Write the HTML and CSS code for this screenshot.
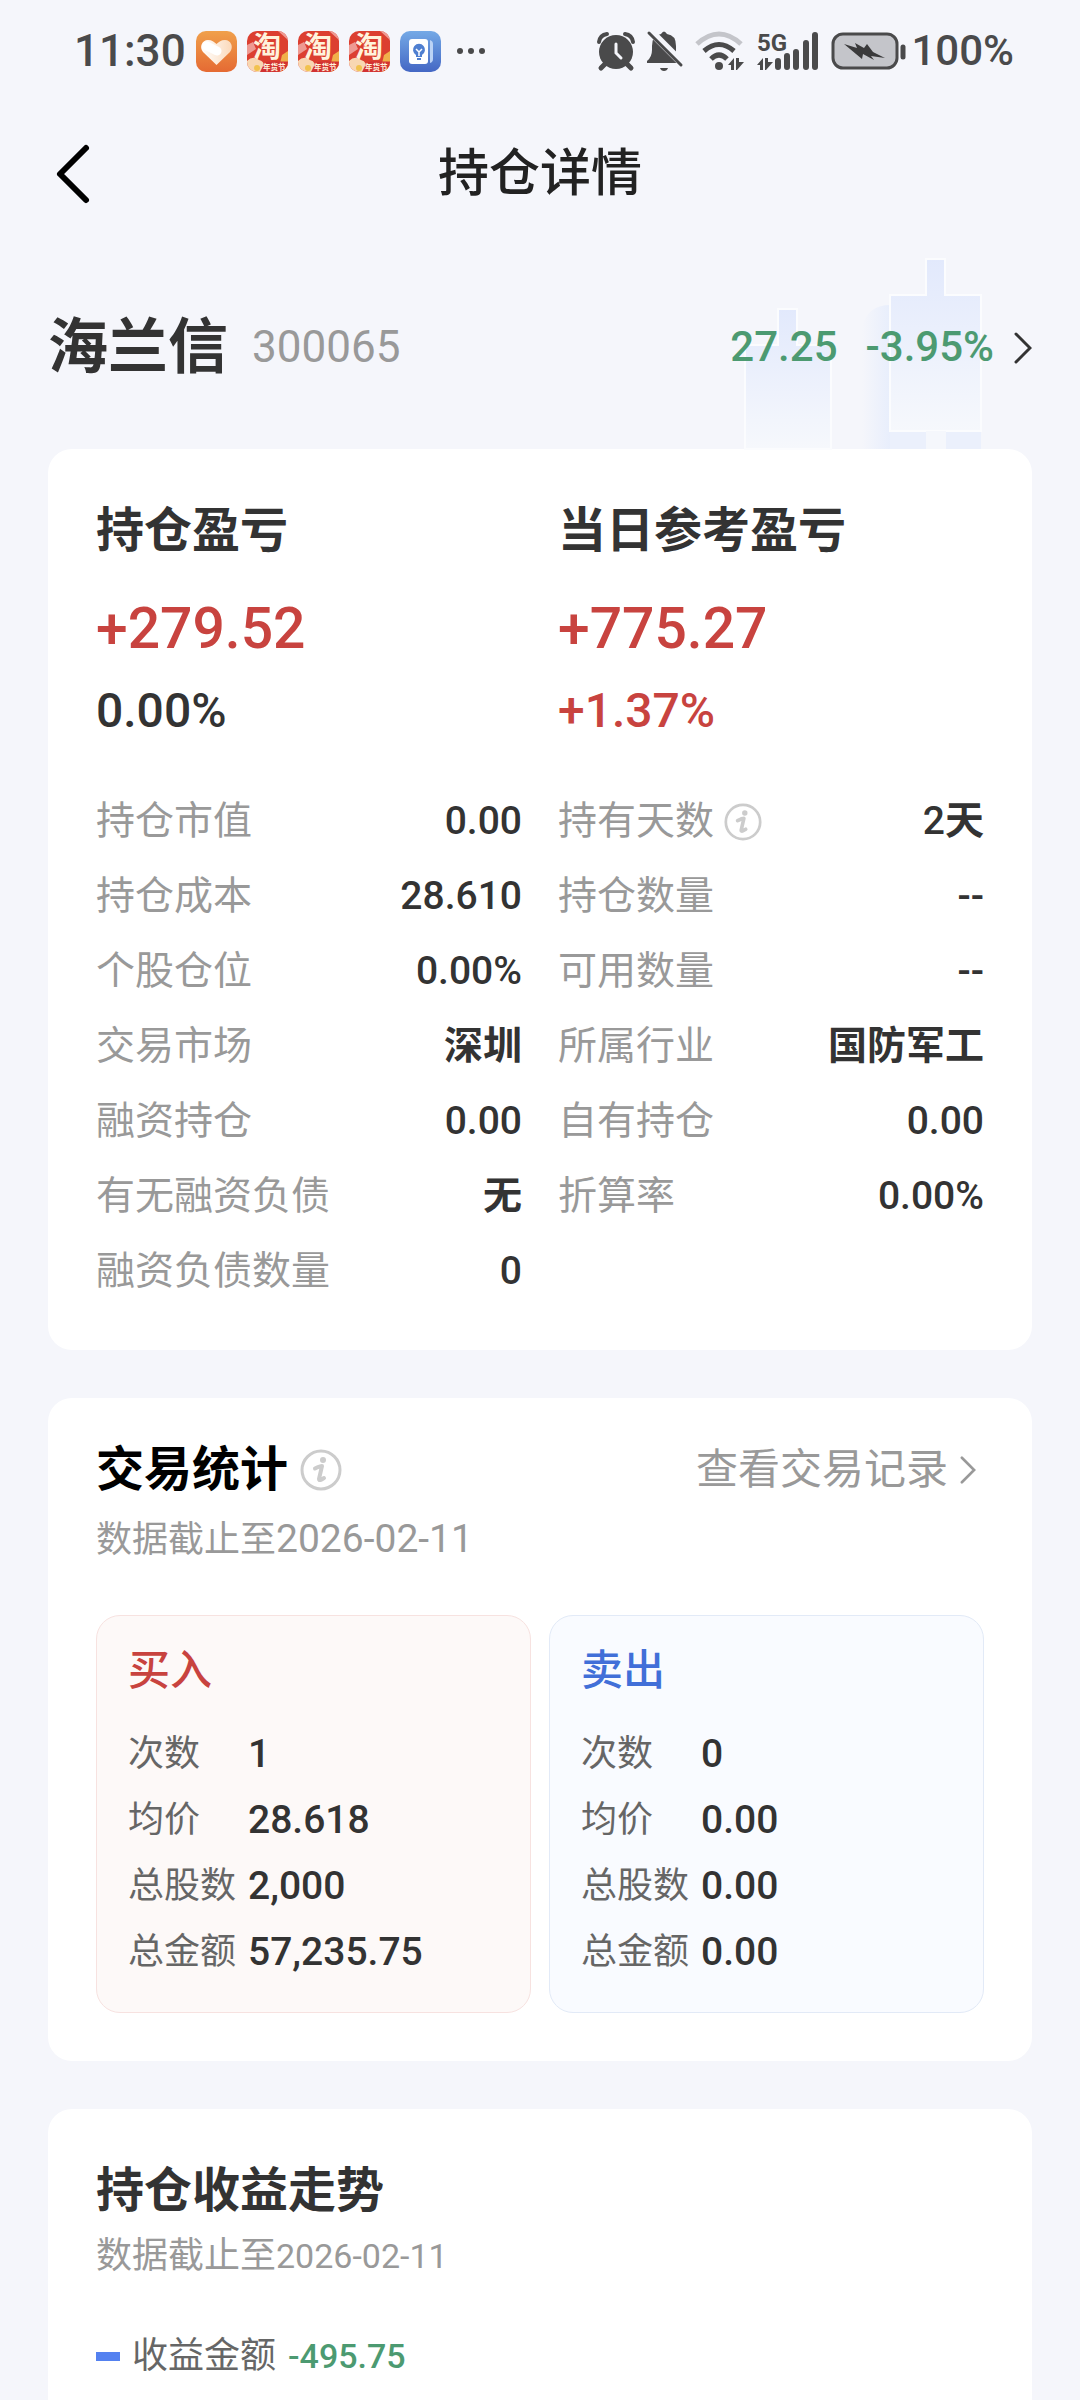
FILE: index.html
```html
<!DOCTYPE html>
<html lang="zh-CN">

<head>
    <meta charset="UTF-8">
    <meta name="viewport" content="width=device-width, initial-scale=1.0">
    <title>持仓详情</title>
    <link rel="stylesheet" href="styles.css">
</head>

<body>
    <!-- 公用图标 -->
    <svg class="symbols" aria-hidden="true">
        <defs>
            <linearGradient id="orange" x1="0" y1="0" x2="0" y2="1">
                <stop offset="0" stop-color="#f0a04b" />
                <stop offset="1" stop-color="#e56a33" />
            </linearGradient>
            <linearGradient id="heart" x1="0" y1="0" x2="1" y2="0">
                <stop offset="0" stop-color="#fff" />
                <stop offset="1" stop-color="#fbd9ba" />
            </linearGradient>
            <linearGradient id="blue" x1="0" y1="0" x2="0" y2="1">
                <stop offset="0" stop-color="#74a9e6" />
                <stop offset="1" stop-color="#4467c4" />
            </linearGradient>
            <clipPath id="app-clip">
                <rect width="82" height="82" rx="20" />
            </clipPath>
        </defs>
        <symbol id="icon-info" viewBox="0 0 42 42">
            <circle cx="21" cy="21" r="19" fill="none" stroke="#ccc" stroke-width="3" />
            <circle cx="23" cy="11" r="3" fill="#ccc" />
            <path d="M15 19.500C18 18 20 17 22 17L19 30C19 32 21 31 24 29" fill="none" stroke="#ccc" stroke-width="4"
                stroke-linecap="round" stroke-linejoin="round" />
        </symbol>
        <symbol id="icon-more" viewBox="0 0 18 32">
            <path d="M2 2L16 16L2 30" fill="none" stroke="currentColor" stroke-width="3" stroke-linecap="round" />
        </symbol>
        <symbol id="icon-updown" viewBox="0 0 16 12">
            <path d="M0 7L6 0V12H3V7ZM8 0H11V4L16 4L9 12H8Z" fill="#4a4a4b" />
        </symbol>
    </svg>

    <div class="status-bar">
        <div class="status-left">
            <span class="status-text">11:30</span>
            <svg class="app-icon" viewBox="0 0 41 41">
                <rect width="41" height="41" rx="10" fill="url(#orange)" />
                <path d="M20.500 34L7 21C3 16 6 9 12 9C16 9 18 11 20.500 13C23 11 25 9 29 9C35 9 38 16 34 21Z" fill="url(#heart)" />
                <path d="M11 15L21 20" stroke="#fff" stroke-width="9" stroke-linecap="round" />
            </svg>
            <svg class="app-icon" viewBox="0 0 82 82">
                <g id="tao">
                    <g clip-path="url(#app-clip)">
                        <rect width="82" height="82" fill="#dc3f30" />
                        <path d="M62 0L82 18V0ZM0 28L12 22L18 36L0 48Z" fill="#ee9a92" />
                        <path d="M62 82L70 48L82 40V82Z" fill="#f0b04a" />
                        <path d="M0 60Q12 48 24 58Q38 60 32 82H0Z" fill="#f8d7b2" />
                        <circle cx="20" cy="74" r="6" fill="#f1c24e" />
                        <path d="M26 82L34 66Q37 61 43 61H82V82Z" fill="#d23232" />
                    </g>
                    <text x="12" y="51" class="tao-main">淘</text>
                    <text x="32" y="77" class="tao-sub">年货节</text>
                </g>
            </svg>
            <svg class="app-icon" viewBox="0 0 82 82"><use href="#tao" /></svg>
            <svg class="app-icon" viewBox="0 0 82 82"><use href="#tao" /></svg>
            <svg class="app-icon" viewBox="0 0 41 41">
                <rect width="41" height="41" rx="10" fill="url(#blue)" />
                <path d="M30 9Q33 10 33 13V28Q33 31 30 32Z" fill="#bcd3f5" />
                <rect x="9" y="8" width="19" height="25" rx="3" fill="#fff" />
                <path d="M16 26V24A6 6 0 1 1 22 24V26Z" fill="#4f7fd0" />
                <path d="M16 18L19 21L22 18M19 21V25" fill="none" stroke="#fff" stroke-width="1.500" />
                <path d="M17 28H21" stroke="#4f7fd0" stroke-width="2" />
            </svg>
            <svg class="dots" viewBox="0 0 30 8">
                <circle cx="4" cy="4" r="3" />
                <circle cx="15" cy="4" r="3" />
                <circle cx="26" cy="4" r="3" />
            </svg>
        </div>
        <div class="status-right">
            <svg width="38" height="40" viewBox="0 0 38 40">
                <path d="M2 11Q3 4 10 3M28 3Q35 4 36 11" fill="none" stroke="#4a4a4b" stroke-width="4" stroke-linecap="round" />
                <path d="M9 32L4 37M29 32L34 37" stroke="#4a4a4b" stroke-width="5" stroke-linecap="round" />
                <circle cx="19" cy="21" r="17" fill="#4a4a4b" />
                <path d="M19 13V22L24 27" fill="none" stroke="#f5f6fb" stroke-width="3" stroke-linecap="round" />
            </svg>
            <svg width="36" height="42" viewBox="0 0 36 42">
                <path d="M0 33V31Q5 27 5 20V16Q5 5 14 4Q17 -1 20 4Q29 5 29 16V24L34 33Z" fill="#4a4a4b" />
                <path d="M13 38H21Q20 41 17 41Q14 41 13 38Z" fill="#4a4a4b" />
                <path d="M2 0L36 34" stroke="#f5f6fb" stroke-width="8" />
                <path d="M2 3L34 35" stroke="#4a4a4b" stroke-width="3" stroke-linecap="round" />
            </svg>
            <svg width="50" height="40" viewBox="0 0 50 40">
                <path d="M2 13Q24 -7 46 13" fill="none" stroke="#c4c5ca" stroke-width="5" />
                <path d="M9 20Q24 7 39 20" fill="none" stroke="#4a4a4b" stroke-width="5" />
                <path d="M16 28Q24 20 32 28" fill="none" stroke="#4a4a4b" stroke-width="5" />
                <circle cx="24" cy="35" r="4" fill="#4a4a4b" />
                <use href="#icon-updown" x="33" y="27" width="16" height="12" />
            </svg>
            <svg width="62" height="40" viewBox="0 0 62 40">
                <text x="0" y="20" class="net-text">5G</text>
                <use href="#icon-updown" x="0" y="27" width="16" height="12" />
                <path d="M21 30V36M30 25V36M39 21V36M49 12V36M58 4V36" stroke="#4a4a4b" stroke-width="6" stroke-linecap="round" />
            </svg>
            <div class="battery">
                <svg width="77" height="40" viewBox="0 0 77 40">
                    <rect x="2" y="3" width="64" height="34" rx="10" fill="#c4c5ca" stroke="#4a4a4b" stroke-width="3" />
                    <path d="M72 16V26" stroke="#4a4a4b" stroke-width="5" stroke-linecap="round" />
                    <path d="M13 13L26 17L24 12L33 17L36 13L42 21L54 27L40 25L43 29L32 23L31 28Z" fill="#3a3a3b" />
                </svg>
                <span class="battery-text">100%</span>
            </div>
        </div>
    </div>

    <header class="nav-bar">
        <button class="back" aria-label="返回">
            <svg width="34" height="58" viewBox="0 0 34 58">
                <path d="M30 3L4 29L30 55" fill="none" stroke="#000" stroke-width="6" stroke-linecap="round" stroke-linejoin="round" />
            </svg>
        </button>
        <h1>持仓详情</h1>
    </header>

    <a class="stock" href="#">
        <!-- K线背景 -->
        <svg class="candles" width="260" height="192" viewBox="0 0 260 192" aria-hidden="true">
            <defs>
                <linearGradient id="candle" x1="0" y1="0" x2="0" y2="1">
                    <stop offset="0" stop-color="#e2e9fc" />
                    <stop offset="1" stop-color="#f6f8fc" />
                </linearGradient>
                <linearGradient id="glow" x1="0" y1="0" x2="1" y2="0">
                    <stop offset="0" stop-color="#e8eefc" stop-opacity="0" />
                    <stop offset="1" stop-color="#e8eefc" />
                </linearGradient>
            </defs>
            <path d="M122 192V70Q128 48 150 48V192Z" fill="url(#glow)" />
            <path d="M150 174H241V192H150Z" fill="#ebf0fc" />
            <path d="M38 52H57V88H91V192H5V88H38Z" fill="url(#candle)" stroke="#fbfcfe" stroke-width="2" />
            <path d="M186 2H205V38H241V174H150V38H186Z" fill="url(#candle)" stroke="#fbfcfe" stroke-width="2" />
            <path d="M186 174H206V192H186Z" fill="#f5f7fc" />
        </svg>
        <span class="stock-name">海兰信</span>
        <span class="stock-code">300065</span>
        <span class="stock-price">27.25</span>
        <span class="stock-change">-3.95%</span>
        <svg class="more" width="18" height="32"><use href="#icon-more" /></svg>
    </a>

    <main>
        <section class="card">
            <div class="columns profit">
                <div>
                    <h2>持仓盈亏</h2>
                    <p class="amount up">+279.52</p>
                    <p class="rate">0.00%</p>
                </div>
                <div>
                    <h2>当日参考盈亏</h2>
                    <p class="amount up">+775.27</p>
                    <p class="rate up">+1.37%</p>
                </div>
            </div>
            <div class="columns">
                <dl class="details">
                    <div><dt>持仓市值</dt><dd>0.00</dd></div>
                    <div><dt>持仓成本</dt><dd>28.610</dd></div>
                    <div><dt>个股仓位</dt><dd>0.00%</dd></div>
                    <div><dt>交易市场</dt><dd class="word">深圳</dd></div>
                    <div><dt>融资持仓</dt><dd>0.00</dd></div>
                    <div><dt>有无融资负债</dt><dd class="word">无</dd></div>
                    <div><dt>融资负债数量</dt><dd>0</dd></div>
                </dl>
                <dl class="details">
                    <div>
                        <dt>持有天数 <button class="info" aria-label="持有天数说明"><svg width="38" height="38"><use href="#icon-info" /></svg></button></dt>
                        <dd>2<span class="word">天</span></dd>
                    </div>
                    <div><dt>持仓数量</dt><dd>--</dd></div>
                    <div><dt>可用数量</dt><dd>--</dd></div>
                    <div><dt>所属行业</dt><dd class="word">国防军工</dd></div>
                    <div><dt>自有持仓</dt><dd>0.00</dd></div>
                    <div><dt>折算率</dt><dd>0.00%</dd></div>
                </dl>
            </div>
        </section>

        <section class="card stats">
            <div class="card-head">
                <h2>交易统计</h2>
                <button class="info" aria-label="交易统计说明"><svg width="42" height="42"><use href="#icon-info" /></svg></button>
                <a class="records" href="#">查看交易记录 <svg width="16" height="28"><use href="#icon-more" /></svg></a>
            </div>
            <p class="date">数据截止至<span>2026-02-11</span></p>
            <div class="trades">
                <div class="trade buy">
                    <h3>买入</h3>
                    <dl>
                        <div><dt>次数</dt><dd>1</dd></div>
                        <div><dt>均价</dt><dd>28.618</dd></div>
                        <div><dt>总股数</dt><dd>2,000</dd></div>
                        <div><dt>总金额</dt><dd>57,235.75</dd></div>
                    </dl>
                </div>
                <div class="trade sell">
                    <h3>卖出</h3>
                    <dl>
                        <div><dt>次数</dt><dd>0</dd></div>
                        <div><dt>均价</dt><dd>0.00</dd></div>
                        <div><dt>总股数</dt><dd>0.00</dd></div>
                        <div><dt>总金额</dt><dd>0.00</dd></div>
                    </dl>
                </div>
            </div>
        </section>

        <section class="card trend">
            <h2>持仓收益走势</h2>
            <p class="date">数据截止至<span>2026-02-11</span></p>
            <p class="legend"><i></i>收益金额 <span>-495.75</span></p>
        </section>
    </main>
</body>

</html>
```

FILE: styles.css
```css
* {
    box-sizing: border-box;
    margin: 0;
    padding: 0;
}

html {
    height: 100%;
    overflow: hidden;
}

body {
    height: 100%;
    overflow: hidden;
    background: #f5f6fb;
    color: #333;
    font-family: Roboto, "Noto Sans CJK SC", sans-serif;
    line-height: 1.25;
}

a {
    color: inherit;
    text-decoration: none;
}

button {
    border: 0;
    background: none;
    line-height: 0;
}

svg {
    flex: none;
    overflow: visible;
}

h2 {
    font-size: 48px;
    font-weight: 700;
    line-height: 64px;
}

.symbols {
    position: absolute;
    width: 0;
    height: 0;
}

/* 状态栏 */
.status-bar {
    display: flex;
    justify-content: space-between;
    height: 102px;
    padding: 0 66px 0 74px;
    color: #4a4a4b;
}

.status-left {
    display: flex;
    align-items: center;
    gap: 10px;
}

.status-right {
    display: flex;
    align-items: center;
    gap: 12px;
}

.status-text {
    font-size: 44px;
    font-weight: 500;
}

.app-icon {
    width: 41px;
    height: 41px;
}

.tao-main {
    fill: #fff3dc;
    font-size: 56px;
    font-weight: 700;
}

.tao-sub {
    fill: #fff3dc;
    font-size: 15px;
    font-weight: 700;
}

.net-text {
    fill: #4a4a4b;
    font-size: 24px;
    font-weight: 700;
}

.dots {
    width: 30px;
    height: 8px;
    margin-left: 5px;
    fill: #4a4a4b;
}

.battery {
    display: flex;
    align-items: center;
    gap: 3px;
}

.battery-text {
    font-size: 42px;
    font-weight: 500;
}

/* 标题栏 */
.nav-bar {
    display: grid;
    grid-template-columns: 1fr auto 1fr;
    align-items: center;
    height: 144px;
    padding: 0 56px;
}

.back {
    justify-self: start;
}

.nav-bar h1 {
    color: #222;
    font-size: 51px;
    font-weight: 500;
}

/* 股票信息 */
.stock {
    position: relative;
    display: flex;
    align-items: center;
    height: 203px;
    padding: 0 48px;
}

.candles {
    position: absolute;
    right: 80px;
    bottom: 0;
}

.stock span,
.more {
    position: relative;
}

.stock-name {
    font-size: 60px;
    font-weight: 700;
}

.stock-code {
    margin: 0 auto 0 24px;
    color: #999;
    font-size: 44px;
}

.stock-price,
.stock-change {
    margin-right: 28px;
    color: #4c9a71;
    font-size: 42px;
    font-weight: 500;
}

.stock-change {
    margin-right: 20px;
}

/* 卡片 */
main {
    display: flex;
    flex-direction: column;
    gap: 48px;
    padding: 0 48px;
}

.card {
    padding: 50px 48px 41px;
    border-radius: 24px;
    background: #fff;
}

.columns {
    display: grid;
    grid-template-columns: 1fr 1fr;
    column-gap: 36px;
}

.profit {
    margin-bottom: 41px;
}

.amount {
    margin: 26px 0 10px;
    font-size: 57px;
    font-weight: 500;
    line-height: 80px;
}

.rate {
    font-size: 48px;
    font-weight: 500;
    line-height: 64px;
}

.up {
    color: #c8433f;
}

.details div {
    display: flex;
    align-items: center;
    justify-content: space-between;
    height: 75px;
    font-size: 39px;
}

.details dt {
    display: flex;
    align-items: center;
    gap: 10px;
    color: #999;
}

.details dd {
    font-weight: 500;
}

.details .word {
    font-weight: 700;
}

.stats {
    padding: 40px 48px 48px;
}

.card-head {
    display: flex;
    align-items: center;
    gap: 12px;
}

.stats h2 {
    color: #000;
}

.records {
    display: flex;
    align-items: center;
    gap: 12px;
    margin-left: auto;
    padding-right: 8px;
    color: #999;
    font-size: 42px;
    line-height: 64px;
}

.date {
    color: #999;
    font-size: 36px;
    line-height: 54px;
}

.stats .date {
    margin: 10px 0 48px;
}

.stats .date span {
    font-size: 39px;
}

.trades {
    display: grid;
    grid-template-columns: 1fr 1fr;
    gap: 18px;
}

.trade {
    padding: 25px 31px 27px;
    border: 1px solid;
    border-radius: 24px;
}

.buy {
    border-color: #f7e2e0;
    background: #fdf9f8;
}

.sell {
    border-color: #e2eaf7;
    background: #f9fbff;
}

.trade h3 {
    margin-bottom: 20px;
    font-size: 42px;
    font-weight: 500;
    line-height: 60px;
}

.buy h3 {
    color: #c8433f;
}

.sell h3 {
    color: #416fd8;
}

.trade dl div {
    display: flex;
    align-items: center;
    height: 66px;
}

.trade dt {
    width: 120px;
    color: #666;
    font-size: 36px;
}

.trade dd {
    font-size: 39px;
    font-weight: 500;
}

.trend .date {
    margin: 6px 0 46px;
}

.trend .date span {
    font-size: 34px;
}

.legend {
    display: flex;
    align-items: center;
    gap: 12px;
    color: #666;
    font-size: 36px;
    line-height: 54px;
}

.legend i {
    width: 24px;
    height: 9px;
    background: #5481f0;
}

.legend span {
    color: #4c9a71;
    font-size: 34px;
    font-weight: 500;
}
```
